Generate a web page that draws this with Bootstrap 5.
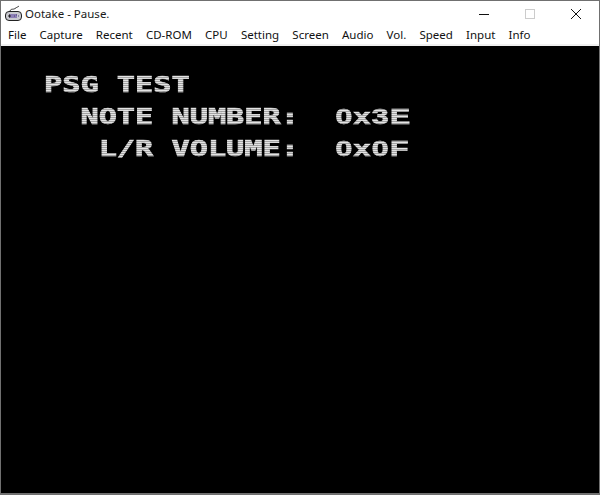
<!DOCTYPE html>
<html lang="en">
<head>
  <meta charset="UTF-8">
  <title>Ootake - Pause.</title>
  <meta name="viewport" content="width=device-width, initial-scale=1">
  <link href="https://cdn.jsdelivr.net/npm/bootstrap@5.3.2/dist/css/bootstrap.min.css" rel="stylesheet">
  <style>
    html, body {
      height: 100%;
      overflow: hidden;
    }
    .app-window {
      width: 600px;
      height: 495px;
      border: 1px solid #707070;
      border-bottom-width: 2px;
      font-family: "Noto Sans", "Open Sans", sans-serif;
    }
    .title-bar {
      height: 23px;
      padding-top: 2px;
      font-size: 11.5px;
      color: #1a1a1a;
    }
    .title-text {
      margin-left: 3px;
    }
    .win-btn {
      width: 46px;
      height: 20px;
    }
    .menu-bar {
      height: 22px;
      font-size: 11.5px;
      color: #111;
      border-bottom: 2px solid #f0f0f0;
      padding-left: 7px;
      padding-top: 2px;
      gap: 13.2px;
    }
    .game-screen {
      background: #000;
      padding: 23px 0 0 43px;
      overflow: hidden;
    }
    .psg-text {
      display: inline-block;
      overflow: visible;
      margin: 0;
      font-family: "DejaVu Sans Mono", monospace;
      font-weight: 700;
      font-size: 22px;
      line-height: 32px;
      white-space: pre;
      transform: scaleX(1.375);
      transform-origin: left top;
      will-change: transform;
      color: #e4e4e4;
      -webkit-text-stroke: 0.7px #e4e4e4;
    }
    /* plain zero, the mono font puts a dot in it */
    .hex-value {
      font-family: "Liberation Sans", sans-serif;
      letter-spacing: 0.046em;
    }
    .scanlines {
      position: absolute;
      inset: 0;
      background: repeating-linear-gradient(transparent 0, transparent 1px, rgba(0, 0, 0, .28) 1px, rgba(0, 0, 0, .28) 2px);
    }
  </style>
</head>
<body class="bg-white">
  <div class="app-window d-flex flex-column bg-white">
    <div class="title-bar d-flex align-items-center flex-shrink-0">
      <svg class="ms-1" width="17" height="17" viewBox="0 0 17 17">
        <path d="M5 7C5 3 8 5 10 3.500S13 2 14 1" fill="none" stroke="#333" stroke-width="1"/>
        <rect x="0.500" y="6.500" width="16" height="9" rx="3.500" fill="#c9c9cf" stroke="#222"/>
        <rect x="4" y="9" width="8" height="4" fill="#8d7fb5"/>
        <path d="M3 11h3M4.500 9.500v3" stroke="#222"/>
        <path d="M9 11h1M11 10h1M13 11h1" stroke="#4b3f78"/>
      </svg>
      <span class="title-text">Ootake - Pause.</span>
      <div class="ms-auto d-flex">
        <div class="win-btn d-flex align-items-center justify-content-center">
          <svg width="10" height="10" viewBox="0 0 10 10"><path d="M0 5.500h10" stroke="#111"/></svg>
        </div>
        <div class="win-btn d-flex align-items-center justify-content-center">
          <svg width="10" height="10" viewBox="0 0 10 10"><rect x="0.500" y="0.500" width="9" height="9" fill="none" stroke="#ccc"/></svg>
        </div>
        <div class="win-btn d-flex align-items-center justify-content-center">
          <svg width="10" height="10" viewBox="0 0 10 10"><path d="M0 0L10 10M10 0L0 10" stroke="#111"/></svg>
        </div>
      </div>
    </div>
    <div class="menu-bar d-flex align-items-center flex-shrink-0">
      <span>File</span>
      <span>Capture</span>
      <span>Recent</span>
      <span>CD-ROM</span>
      <span>CPU</span>
      <span>Setting</span>
      <span>Screen</span>
      <span>Audio</span>
      <span>Vol.</span>
      <span>Speed</span>
      <span>Input</span>
      <span>Info</span>
    </div>
    <div class="game-screen flex-grow-1 position-relative">
<pre class="psg-text">PSG TEST
  NOTE NUMBER:  <span class="hex-value">0x3E</span>
   L/R VOLUME:  <span class="hex-value">0x0F</span></pre>
      <div class="scanlines"></div>
    </div>
  </div>
  <script src="https://cdn.jsdelivr.net/npm/bootstrap@5.3.2/dist/js/bootstrap.bundle.min.js"></script>
</body>
</html>
